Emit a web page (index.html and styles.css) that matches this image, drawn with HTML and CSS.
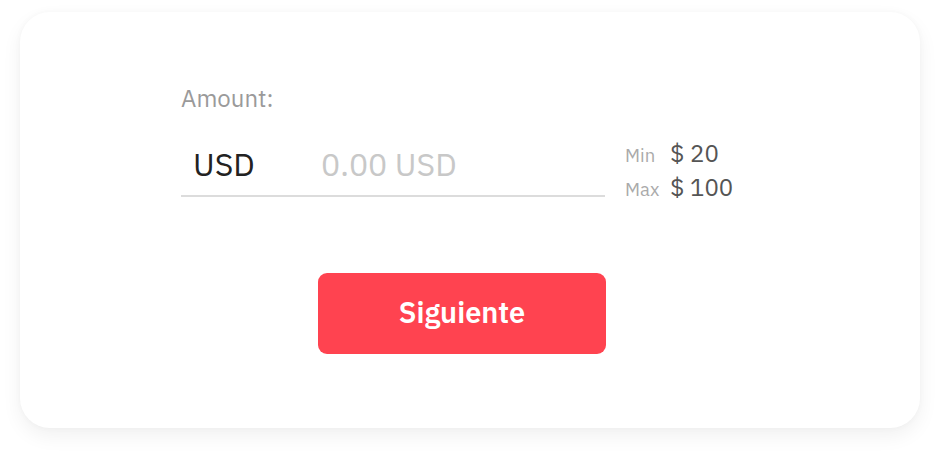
FILE: index.html
```html
<!DOCTYPE html>
<html>
<head>
<meta charset="utf-8">
<link rel="stylesheet" href="styles.css">
</head>
<body>
<div class="card">
  <div class="form">
    <div class="label">Amount:</div>
    <div class="row">
      <div class="field">
        <span class="currency">USD</span>
        <span class="placeholder">0.00 USD</span>
      </div>
      <div class="limits">
        <div class="limit"><span class="lk">Min</span><span class="lv">$ 20</span></div>
        <div class="limit"><span class="lk">Max</span><span class="lv">$ 100</span></div>
      </div>
    </div>
    <div class="actions">
      <button class="btn">Siguiente</button>
    </div>
  </div>
</div>
</body>
</html>
```
FILE: styles.css
```css
html, body {
  margin: 0;
  padding: 0;
  background: #ffffff;
  font-family: "IBM Plex Sans", "Noto Sans", "Open Sans", sans-serif;
}
body {
  padding: 12px 20px 28px 20px;
  box-sizing: border-box;
  min-height: 456px;
}
.card {
  width: 900px;
  height: 416px;
  box-sizing: border-box;
  background: #fff;
  border-radius: 30px;
  box-shadow: 0 8px 20px rgba(0, 0, 0, 0.06), 0 0 6px rgba(0,0,0,0.03);
  padding: 71px 0 0 161px;
}
.form {
  width: 580px;
}
.label {
  font-size: 24px;
  line-height: 30px;
  color: #9a9a9a;
  height: 30px;
}
.row {
  display: flex;
  align-items: flex-start;
  margin-top: 20px;
}
.field {
  width: 424px;
  height: 64px;
  box-sizing: border-box;
  border-bottom: 2px solid #dcdcdc;
  display: flex;
  align-items: center;
  padding-left: 12px;
}
.currency {
  font-size: 32px;
  color: #222;
  width: 128px;
}
.placeholder {
  font-size: 32px;
  color: #c8c8c8;
}
.limits {
  margin-left: 20px;
  margin-top: 5px;
  display: flex;
  flex-direction: column;
  gap: 4px;
}
.limit {
  display: flex;
  align-items: baseline;
  height: 30px;
  line-height: 30px;
}
.lk {
  font-size: 18.5px;
  color: #aaaaaa;
  width: 45px;
}
.lv {
  font-size: 24px;
  color: #555;
}
.actions {
  margin-top: 71px;
  padding-left: 137px;
}
.btn {
  width: 288px;
  height: 81px;
  border: none;
  border-radius: 9px;
  background: #ff4350;
  color: #fff;
  font-family: inherit;
  font-size: 29px;
  font-weight: 600;
  padding: 0 0 4px 0;
}
```
